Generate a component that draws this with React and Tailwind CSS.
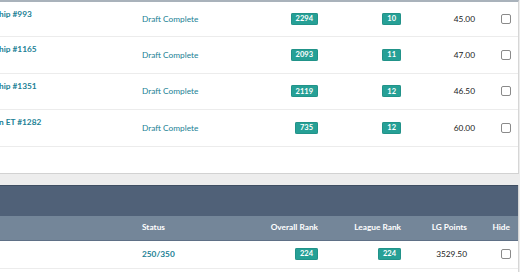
const drafts = [
  { title: "hip #993", overall: "2294", league: "10", points: "45.00" },
  { title: "hip #1165", overall: "2093", league: "11", points: "47.00" },
  { title: "hip #1351", overall: "2119", league: "12", points: "46.50" },
  { title: "n ET #1282", overall: "735", league: "12", points: "60.00" },
];

const Badge = ({ children }) => (
  <span className="inline-flex h-[12px] items-center rounded-[2px] bg-[#26a096] px-[5px] text-[7.5px] font-bold leading-none text-white shadow-[inset_0_0_0_0.5px_#1c857c]">
    {children}
  </span>
);

const Check = () => (
  <span className="inline-block h-[10px] w-[10px] rounded-[2px] border border-[#8a8a8a] bg-white" />
);

export default function App() {
  return (
    <div
      className="h-[272px] w-[520px] overflow-hidden bg-[#ededed] text-[8.3px]"
      style={{ fontFamily: "Lato, 'Open Sans', sans-serif" }}
    >
      {/* Drafts card */}
      <div className="w-[519px] border-r border-[#d6d6d6] border-t-2 border-t-[#a9b2bb] bg-white">
        {drafts.map((d, i) => (
          <div
            key={i}
            className={`grid grid-cols-[142px_120px_56px_83px_74px_44px] border-b border-[#ececec] ${
              i === 0 ? "h-[35px]" : "h-[36.5px]"
            }`}
          >
            <div className="-ml-[1px] pt-[6px] font-bold text-[#217f95] whitespace-nowrap">
              {d.title}
            </div>
            <div className="flex items-center text-[#217f95]">Draft Complete</div>
            <div className="flex items-center justify-end">
              <Badge>{d.overall}</Badge>
            </div>
            <div className="flex items-center justify-end">
              <Badge>{d.league}</Badge>
            </div>
            <div className="flex items-center justify-end text-[#222]">{d.points}</div>
            <div className="flex items-center justify-end pr-[8px]">
              <Check />
            </div>
          </div>
        ))}
        <div className="h-[26px]" />
      </div>

      {/* separator band */}
      <div className="h-[12px] w-[519px] border-t border-[#d2d2d2] bg-[#ededed]" />

      {/* Standings card */}
      <div className="w-[519px] border-r border-[#d6d6d6] bg-white">
        <div className="h-[31px] border-t border-[#3f4e62] bg-[#506178]" />
        <div className="grid h-[25px] grid-cols-[142px_130px_46px_83px_66px_52px] border-b border-[#5f7086] bg-[#748699] font-bold text-white">
          <div />
          <div className="flex items-center">Status</div>
          <div className="flex items-center justify-end whitespace-nowrap">Overall Rank</div>
          <div className="flex items-center justify-end whitespace-nowrap">League Rank</div>
          <div className="flex items-center justify-end whitespace-nowrap">LG Points</div>
          <div className="flex items-center justify-end pr-[9px]">Hide</div>
        </div>
        <div className="grid h-[28px] grid-cols-[142px_130px_46px_83px_66px_52px] border-b border-[#ececec]">
          <div />
          <div className="flex items-center font-bold text-[#217f95]">250/350</div>
          <div className="flex items-center justify-end">
            <Badge>224</Badge>
          </div>
          <div className="flex items-center justify-end">
            <Badge>224</Badge>
          </div>
          <div className="flex items-center justify-end text-[#222]">3529.50</div>
          <div className="flex items-center justify-end pr-[8px]">
            <Check />
          </div>
        </div>
        <div className="h-[10px]" />
      </div>
    </div>
  );
}
